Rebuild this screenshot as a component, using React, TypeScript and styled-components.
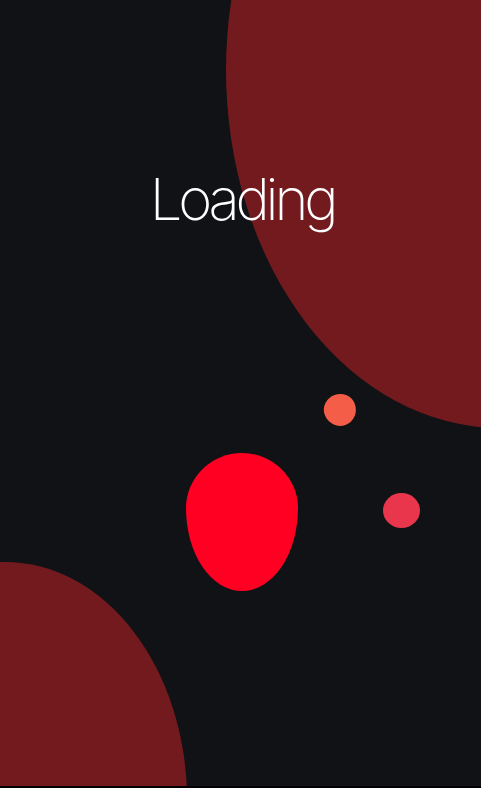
import styled, { createGlobalStyle } from "styled-components";

const GlobalStyle = createGlobalStyle`
  html, body {
    margin: 0;
    padding: 0;
    background: #000000;
  }
`;

const Screen = styled.main`
  position: relative;
  width: 481px;
  height: 786px;
  overflow: hidden;
  background: #101215;
  display: flex;
  flex-direction: column;
  align-items: center;
  padding-top: 164px;
  box-sizing: border-box;
`;

const Backdrop = styled.div<{ $left: number; $top: number; $w: number; $h: number }>`
  position: absolute;
  left: ${({ $left }) => $left}px;
  top: ${({ $top }) => $top}px;
  width: ${({ $w }) => $w}px;
  height: ${({ $h }) => $h}px;
  border-radius: 50%;
  background: #731a1f;
`;

const Title = styled.h1`
  position: relative;
  z-index: 1;
  margin: 0 0 0 3px;
  font-family: Inter, "DejaVu Sans", sans-serif;
  font-weight: 200;
  font-size: 58px;
  line-height: 70px;
  letter-spacing: -4.2px;
  color: #ffffff;
`;

const Blob = styled.div<{
  $left: number;
  $top: number;
  $w: number;
  $h: number;
  $color: string;
  $radius: string;
  $rotate?: number;
}>`
  position: absolute;
  left: ${({ $left }) => $left}px;
  top: ${({ $top }) => $top}px;
  width: ${({ $w }) => $w}px;
  height: ${({ $h }) => $h}px;
  background: ${({ $color }) => $color};
  border-radius: ${({ $radius }) => $radius};
  transform: rotate(${({ $rotate = 0 }) => $rotate}deg);
`;

export default function App() {
  return (
    <>
      <GlobalStyle />
      <Screen>
        <Backdrop $left={226} $top={-288} $w={548} $h={716} />
        <Backdrop $left={-177} $top={562} $w={364} $h={476} />
        <Title>Loading</Title>
        <Blob
          $left={186}
          $top={453}
          $w={112}
          $h={138}
          $color="#ff0022"
          $radius="50% 50% 50% 50% / 40% 40% 60% 60%"
        />
        <Blob
          $left={324}
          $top={394}
          $w={32}
          $h={32}
          $color="#f45e48"
          $radius="50% 50% 50% 50% / 48% 48% 52% 52%"
          $rotate={-20}
        />
        <Blob
          $left={383}
          $top={493}
          $w={37}
          $h={35}
          $color="#ea364c"
          $radius="50%"
        />
      </Screen>
    </>
  );
}
